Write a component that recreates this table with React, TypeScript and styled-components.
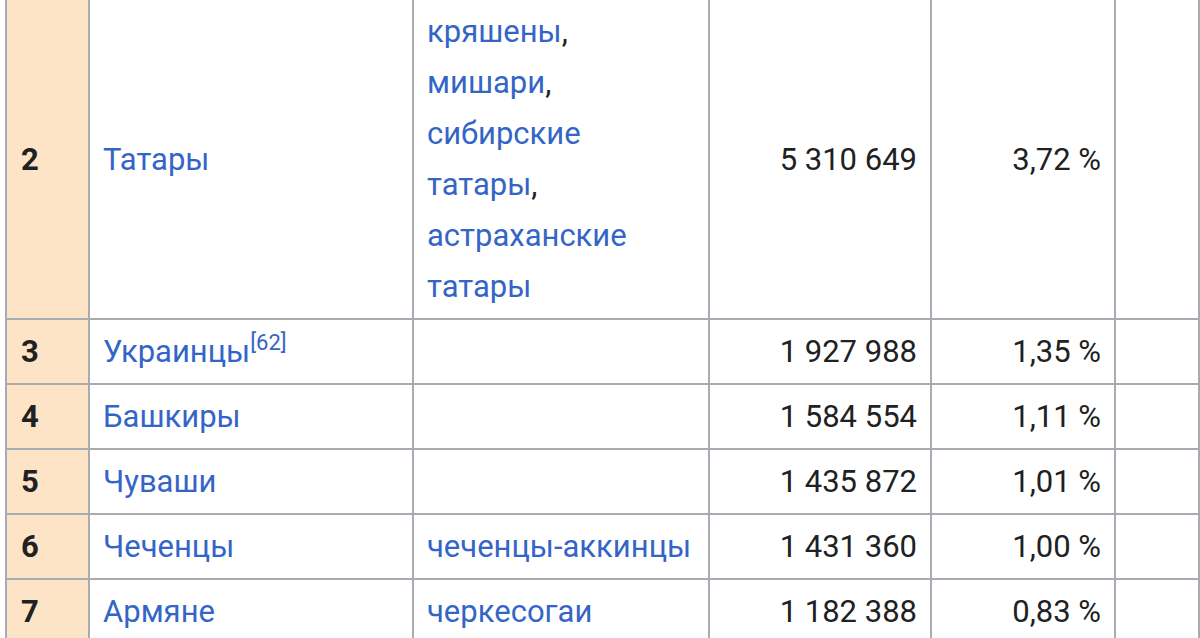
import React from 'react';
import styled, { createGlobalStyle } from 'styled-components';

const GlobalStyle = createGlobalStyle`
	html, body {
		margin: 0;
		padding: 0;
		background: #fff;
		overflow: hidden;
	}
	body {
		font-family: Roboto, 'Noto Sans', 'Liberation Sans', sans-serif;
	}
`;

type Row = {
	rank: number;
	name: string;
	note?: string;
	groups: string[][];
	count: string;
	share: string;
};

const widths = [83, 324, 296, 222, 184, 84];

const rows: Row[] = [
	{
		rank: 2,
		name: 'Татары',
		groups: [['кряшены', ','], ['мишари', ','], ['сибирские', ''], ['татары', ','], ['астраханские', ''], ['татары', '']],
		count: '5 310 649',
		share: '3,72 %'
	},
	{ rank: 3, name: 'Украинцы', note: '[62]', groups: [], count: '1 927 988', share: '1,35 %' },
	{ rank: 4, name: 'Башкиры', groups: [], count: '1 584 554', share: '1,11 %' },
	{ rank: 5, name: 'Чуваши', groups: [], count: '1 435 872', share: '1,01 %' },
	{ rank: 6, name: 'Чеченцы', groups: [['чеченцы-аккинцы', '']], count: '1 431 360', share: '1,00 %' },
	{ rank: 7, name: 'Армяне', groups: [['черкесогаи', '']], count: '1 182 388', share: '0,83 %' }
];

const App = () => {
	return (
		<>
			<GlobalStyle />
			<Table>
				<colgroup>
					{widths.map((w, i) => (
						<Col key={i} $w={w} />
					))}
				</colgroup>
				<tbody>
					{rows.map(row => (
						<tr key={row.rank}>
							<RankCell>{row.rank}</RankCell>
							<Cell>
								<Link>{row.name}</Link>
								{row.note && <Ref>{row.note}</Ref>}
							</Cell>
							<Cell>
								{row.groups.map(([word, comma], i) => (
									<Line key={i}>
										<Link>{word}</Link>
										{comma}
									</Line>
								))}
							</Cell>
							<Cell $align='right'>{row.count}</Cell>
							<Cell $align='right'>{row.share}</Cell>
							<Cell></Cell>
						</tr>
					))}
				</tbody>
			</Table>
		</>
	);
};

const Table = styled.table`
	table-layout: fixed;
	border-collapse: separate;
	border-spacing: 0;
	width: 1195px;
	margin-left: 5px;
	border-left: 2px solid #a7acb2;
	font-size: 31px;
	line-height: 51px;
	color: #202122;
`;

const Col = styled.col<{ $w: number }>`
	width: ${p => p.$w}px;
`;

const Cell = styled.td<{ $align?: 'left' | 'right' }>`
	box-sizing: border-box;
	padding: 6px 13px;
	border-right: 2px solid #a7acb2;
	border-bottom: 2px solid #a7acb2;
	vertical-align: middle;
	text-align: ${p => p.$align || 'left'};
	white-space: nowrap;
	background: #fff;
`;

const RankCell = styled(Cell)`
	background: #fee4c6;
	font-weight: 700;
	padding-left: 14px;
`;

const Link = styled.span`
	color: #3465c6;
`;

const Line = styled.div`
	display: block;
`;

const Ref = styled.sup`
	font-size: 22px;
	line-height: 1;
	vertical-align: 12px;
	color: #3465c6;
`;

export default App;
